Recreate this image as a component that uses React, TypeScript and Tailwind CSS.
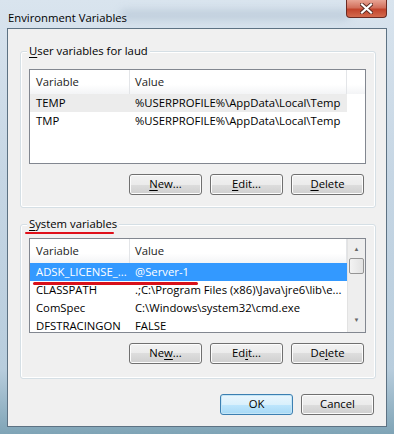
import React from 'react'

const FONT = { fontFamily: '"Open Sans", "Noto Sans", sans-serif' }

function Key({ children }: { children: React.ReactNode }) {
  return <span className="underline underline-offset-2 decoration-1">{children}</span>
}

function Btn({ children, primary }: { children: React.ReactNode; primary?: boolean }) {
  return (
    <div
      className={`flex h-[21px] w-[73px] items-center justify-center rounded-[3px] border text-[11.3px] text-black ${
        primary
          ? 'border-[#3c7fb1] bg-[linear-gradient(#eaf6fd_0%,#d9f0fc_50%,#bee6fd_50%,#a7d9f5_100%)] shadow-[inset_0_0_0_1px_#c4e5f6]'
          : 'border-[#707070] bg-[linear-gradient(#f2f2f2_0%,#ebebeb_50%,#dddddd_50%,#cfcfcf_100%)] shadow-[inset_0_0_0_1px_#fcfcfc]'
      }`}
    >
      {children}
    </div>
  )
}

interface Row {
  name: string
  value: string
  state?: 'hover' | 'selected'
}

function VarList({ rows, height, scroll }: { rows: Row[]; height: number; scroll?: boolean }) {
  return (
    <div className="relative overflow-hidden border border-[#828790] bg-white" style={{ height }}>
      <div className="flex h-[24px] bg-[linear-gradient(#ffffff_0%,#ffffff_60%,#f3f4f6_100%)] text-[11.3px] text-[#222]">
        <div className="flex w-[100px] items-center border-r border-[#e3e5e8] pl-[6px]">Variable</div>
        <div className="flex w-[217px] items-center border-r border-[#e3e5e8] pl-[5px]">Value</div>
      </div>
      {rows.map((r) => (
        <div
          key={r.name}
          className={`flex h-[18px] w-[317px] items-center text-[11.3px] ${
            r.state === 'selected' ? 'bg-[#3399ff] text-white' : r.state === 'hover' ? 'bg-[#ececec] text-black' : 'text-black'
          }`}
        >
          <div className="w-[100px] whitespace-nowrap pl-[6px]">{r.name}</div>
          <div className="w-[217px] whitespace-nowrap pl-[5px]">{r.value}</div>
        </div>
      ))}
      {scroll && (
        <div className="absolute right-0 top-0 flex h-full w-[18px] flex-col items-center border-l border-[#e2e2e2] bg-[#eeeeee]">
          <div className="flex h-[17px] w-full items-end justify-center pb-[2px] text-[6px] text-[#666]">▲</div>
          <div className="mt-[2px] h-[16px] w-[15px] rounded-[2px] border border-[#959595] bg-[linear-gradient(90deg,#f3f3f3,#e2e2e2)]" />
          <div className="flex-1" />
          <div className="flex h-[17px] w-full items-start justify-center pt-[1px] text-[6px] text-[#666]">▼</div>
        </div>
      )}
    </div>
  )
}

function Group({ label, children, height }: { label: React.ReactNode; children: React.ReactNode; height: number }) {
  return (
    <div className="relative ml-[12px] w-[356px] rounded-[3px] border border-[#d5dfe5] shadow-[inset_0_0_0_1px_#ffffff]" style={{ height }}>
      <div className="absolute left-[6px] top-[-9px] bg-[#f0f0f0] px-[2px] text-[11.3px] leading-[16px] text-black">{label}</div>
      {children}
    </div>
  )
}

export default function App() {
  return (
    <div style={FONT} className="relative h-[434px] w-[394px] overflow-hidden bg-[linear-gradient(180deg,#d9e4ee_0%,#c6d6e4_40%,#b8cddd_85%,#7fa4b6_100%)]">
      {/* title bar */}
      <div className="relative h-[28px]">
        <div className="absolute left-[120px] top-[10px] h-[10px] w-[230px] rounded-full bg-[#9aaec2] opacity-40 blur-[4px]" />
        <div className="absolute left-[8px] top-[10px] text-[11.3px] leading-[16px] text-black">Environment Variables</div>
        <div className="absolute right-[7px] top-0 flex h-[18px] w-[41px] items-center justify-center rounded-b-[4px] border border-t-0 border-[#6b2a22] bg-[linear-gradient(#e8a494_0%,#d2705c_45%,#c2442c_55%,#d36a4e_100%)]">
          <svg width="13" height="11" viewBox="0 0 13 11">
            <path d="M2 1.5 L11 9.5 M11 1.5 L2 9.5" stroke="#5a2a22" strokeWidth="4" strokeLinecap="square" />
            <path d="M2 1.5 L11 9.5 M11 1.5 L2 9.5" stroke="#ffffff" strokeWidth="2.2" strokeLinecap="square" />
          </svg>
        </div>
      </div>

      {/* client area */}
      <div className="mx-[7px] h-[399px] border border-[#5d7283] bg-[#f0f0f0]">
        <div className="h-[22px]" />
        <Group
          height={157}
          label={
            <>
              <Key>U</Key>ser variables for laud
            </>
          }
        >
          <div className="ml-[8px] mt-[17px] w-[337px]">
            <VarList
              height={95}
              rows={[
                { name: 'TEMP', value: '%USERPROFILE%\\AppData\\Local\\Temp', state: 'hover' },
                { name: 'TMP', value: '%USERPROFILE%\\AppData\\Local\\Temp' },
              ]}
            />
          </div>
          <div className="mt-[10px] flex gap-[8px] pl-[108px]">
            <Btn>
              <Key>N</Key>ew...
            </Btn>
            <Btn>
              <Key>E</Key>dit...
            </Btn>
            <Btn>
              <Key>D</Key>elete
            </Btn>
          </div>
        </Group>
        <div className="h-[16px]" />
        <div className="relative">
          <Group
            height={155}
            label={
              <>
                <Key>S</Key>ystem variables
              </>
            }
          >
            <div className="ml-[8px] mt-[13px] w-[337px]">
              <VarList
                height={95}
                scroll
                rows={[
                  { name: 'ADSK_LICENSE_...', value: '@Server-1', state: 'selected' },
                  { name: 'CLASSPATH', value: '.;C:\\Program Files (x86)\\Java\\jre6\\lib\\e...' },
                  { name: 'ComSpec', value: 'C:\\Windows\\system32\\cmd.exe' },
                  { name: 'DFSTRACINGON', value: 'FALSE' },
                ]}
              />
            </div>
            <div className="mt-[10px] flex gap-[8px] pl-[108px]">
              <Btn>
                Ne<Key>w</Key>...
              </Btn>
              <Btn>
                Ed<Key>i</Key>t...
              </Btn>
              <Btn>
                De<Key>l</Key>ete
              </Btn>
            </div>
          </Group>
          {/* red annotation marks */}
          <div className="absolute left-[17px] top-[8px] h-[2px] w-[89px] rounded-full bg-[#e0101a]" />
          <div className="absolute left-[25px] top-[58px] h-[3px] w-[165px] rounded-full bg-[#d8101a]" />
        </div>
        <div className="mt-[15px] flex justify-end gap-[8px] pr-[12px]">
          <Btn primary>OK</Btn>
          <Btn>Cancel</Btn>
        </div>
      </div>
    </div>
  )
}
